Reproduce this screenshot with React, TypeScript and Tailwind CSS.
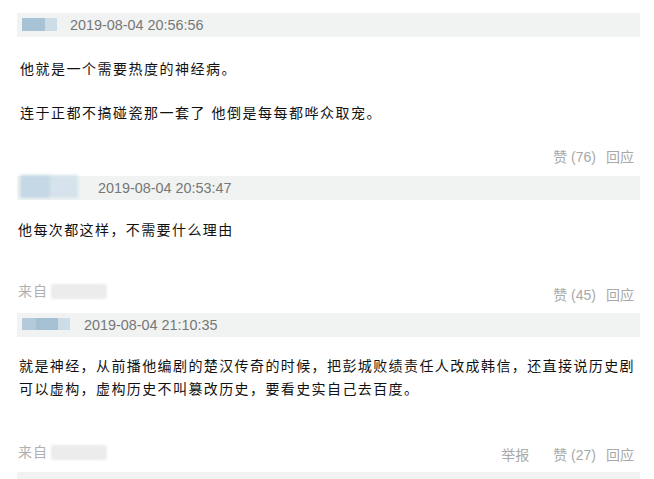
import React from "react";

const cjk = { fontFamily: '"Liberation Sans", "Noto Sans CJK SC", sans-serif' };

function Header({ date, dateX, blur }: { date: string; dateX: string; blur: React.ReactNode }) {
  return (
    <div className="relative h-[24px] bg-[#f0f3f2] flex items-center">
      {blur}
      <span className={`absolute ${dateX} top-0 leading-[24px] text-[14.4px] text-[#777]`} style={cjk}>
        {date}
      </span>
    </div>
  );
}

function Actions({ report, likes }: { report?: boolean; likes: string }) {
  return (
    <div className="flex items-center gap-[10px] text-[14px] leading-[20px] text-[#a8a8a8]" style={cjk}>
      {report && <span className="mr-[14px]">举报</span>}
      <span>赞 ({likes})</span>
      <span>回应</span>
    </div>
  );
}

function From() {
  return (
    <div className="flex items-center text-[14px] leading-[20px] text-[#b0b0b0]" style={cjk}>
      <span className="tracking-[1px]">来自</span>
      <span className="ml-[3px] w-[56px] h-[15px] bg-[#ececec] rounded-[3px] blur-[1px]"></span>
    </div>
  );
}

export default function App() {
  return (
    <div className="w-[654px] h-[479px] bg-white overflow-hidden pt-[13px] pl-[17px] pr-[14px]">
      {/* Comment 1 */}
      <Header
        date="2019-08-04 20:56:56"
        dateX="left-[53px]"
        blur={
          <div className="absolute left-[5px] top-[5px] flex h-[13px] blur-[0.6px]">
            <div className="w-[23px] h-full bg-[#a9c3d6]"></div>
            <div className="w-[12px] h-full bg-[#cddde8]"></div>
          </div>
        }
      />
      <div className="pl-[3px] mt-[21px] text-[14px] leading-[22px] text-[#111] tracking-[1.5px]" style={cjk}>
        <p>他就是一个需要热度的神经病。</p>
        <p className="mt-[22px]">连于正都不搞碰瓷那一套了 他倒是每每都哗众取宠。</p>
      </div>
      <div className="flex justify-end mt-[23px] pr-[6px]">
        <Actions likes="76" />
      </div>

      {/* Comment 2 */}
      <div className="mt-[9px]">
        <Header
          date="2019-08-04 20:53:47"
          dateX="left-[81px]"
          blur={
            <div className="absolute left-[3px] top-[-1px] flex h-[23px] blur-[1.5px]">
              <div className="w-[30px] h-full bg-[#c5d8e5]"></div>
              <div className="w-[28px] h-full bg-[#d6e3ec]"></div>
            </div>
          }
        />
      </div>
      <div className="pl-[1px] mt-[19px] text-[14px] leading-[22px] text-[#111] tracking-[1.4px]" style={cjk}>
        <p>他每次都这样，不需要什么理由</p>
      </div>
      <div className="flex justify-between items-start mt-[40px] pl-[1px] pr-[6px]">
        <From />
        <div className="mt-[4px]">
          <Actions likes="45" />
        </div>
      </div>

      {/* Comment 3 */}
      <div className="mt-[8px]">
        <Header
          date="2019-08-04 21:10:35"
          dateX="left-[67px]"
          blur={
            <div className="absolute left-[5px] top-[5px] flex h-[12px] blur-[0.6px]">
              <div className="w-[14px] h-full bg-[#b3cadb]"></div>
              <div className="w-[22px] h-full bg-[#a6c0d3]"></div>
              <div className="w-[12px] h-full bg-[#cddde8]"></div>
            </div>
          }
        />
      </div>
      <div className="pl-[2px] mt-[18px] text-[14px] leading-[23px] text-[#111] tracking-[1.4px] whitespace-nowrap" style={cjk}>
        <p>就是神经，从前播他编剧的楚汉传奇的时候，把彭城败绩责任人改成韩信，还直接说历史剧</p>
        <p>可以虚构，虚构历史不叫篡改历史，要看史实自己去百度。</p>
      </div>
      <div className="flex justify-between items-start mt-[41px] pl-[1px] pr-[6px]">
        <From />
        <div className="mt-[3px]">
          <Actions report likes="27" />
        </div>
      </div>
      <div className="mt-[7px] h-[24px] bg-[#f0f3f2]"></div>
    </div>
  );
}
